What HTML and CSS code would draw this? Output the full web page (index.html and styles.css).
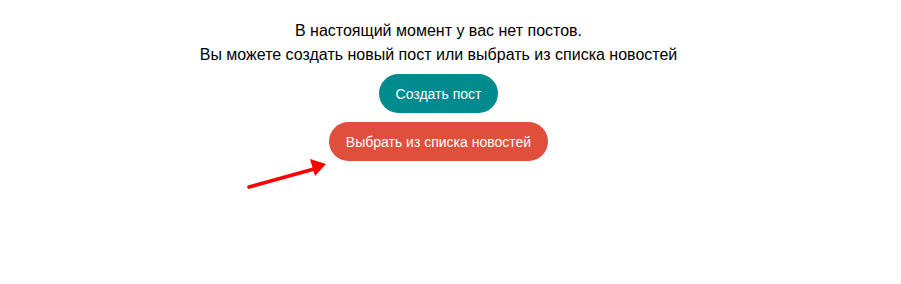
FILE: index.html
```html
<!DOCTYPE html>
<html lang="ru">
<head>
    <meta charset="UTF-8">
    <meta name="viewport" content="width=device-width, initial-scale=1.0">
    <title>Посты</title>
    <link rel="stylesheet" href="styles.css">
</head>
<body>
    <div id="empty">
        <p class="message">В настоящий момент у вас нет постов.<br>Вы можете создать новый пост или выбрать из списка новостей</p>

        <div class="actions">
            <button class="btn btn-create">Создать пост</button>
            <button class="btn btn-news">Выбрать из списка новостей</button>
        </div>
    </div>

    <svg class="arrow" width="90" height="40" viewBox="0 0 90 40">
        <line x1="5" y1="31" x2="70" y2="13" stroke="#ff0000" stroke-width="3.6" stroke-linecap="round"/>
        <polygon points="82,8 66,3 71,20" fill="#ff0000"/>
    </svg>
</body>
</html>
```

FILE: styles.css
```css
body {
    font-family: Arial, "Liberation Sans", sans-serif;
    margin: 0;
    background-color: #ffffff;
    color: #000000;
}

#empty {
    text-align: center;
    padding: 19px 24px 0 0;
}

.message {
    font-size: 16px;
    line-height: 24px;
    margin: 0 0 7px;
}

.actions {
    display: flex;
    flex-direction: column;
    align-items: center;
    gap: 9px;
}

.btn {
    font-family: Arial, "Liberation Sans", sans-serif;
    font-size: 14px;
    color: #ffffff;
    border: none;
    border-radius: 20px;
    height: 39px;
    padding: 0 17px;
    cursor: pointer;
}

.btn-create {
    background-color: #008b8f;
}

.btn-news {
    background-color: #e04f3c;
}

.arrow {
    position: absolute;
    left: 244px;
    top: 156px;
}
```
